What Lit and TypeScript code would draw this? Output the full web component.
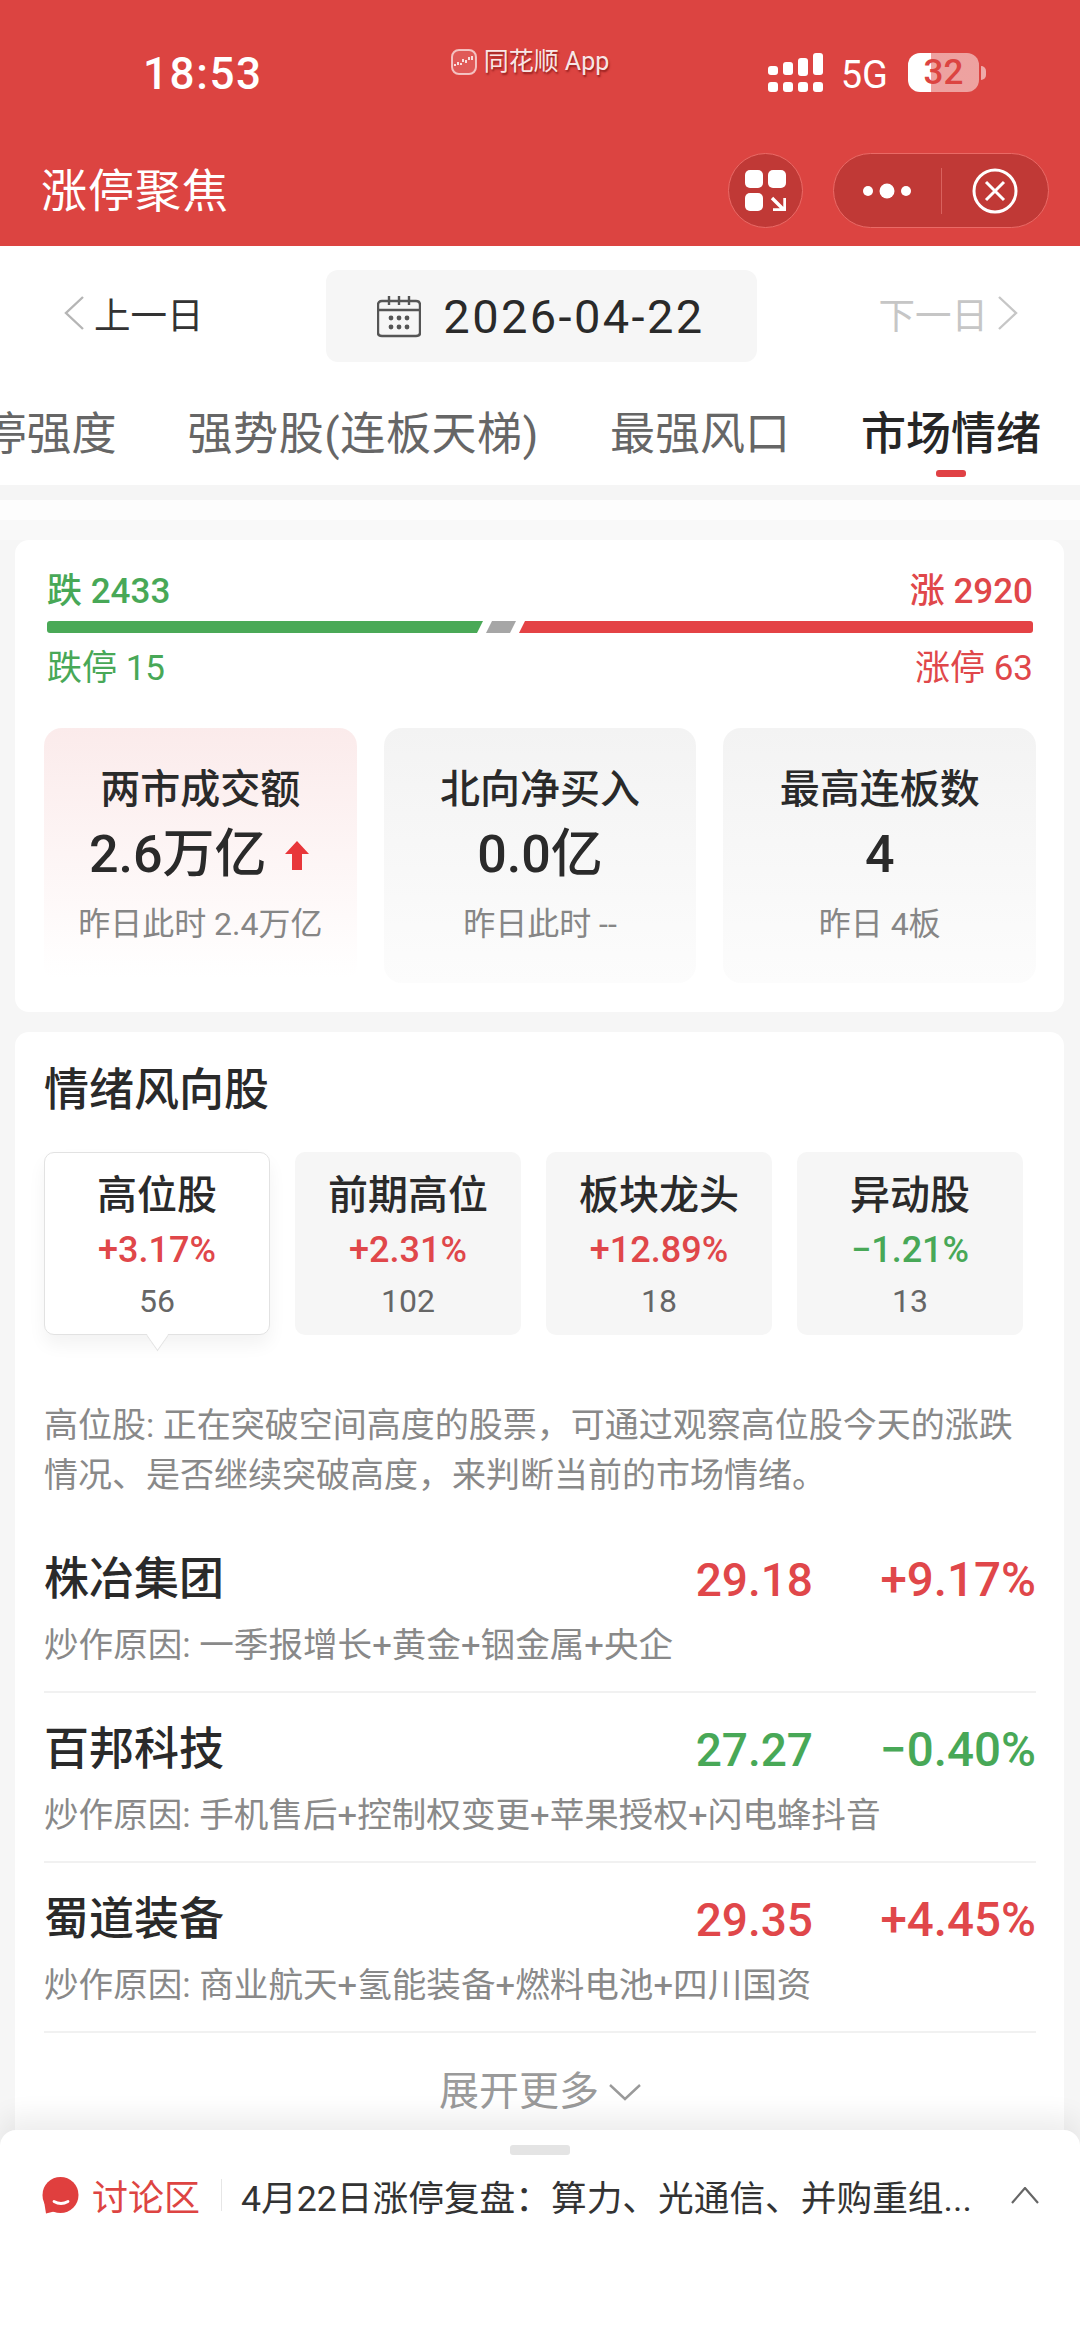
import { LitElement, css, html, svg } from 'lit';
import { customElement } from 'lit/decorators.js';
import { classMap } from 'lit/directives/class-map.js';

const metrics = [
  { title: '两市成交额', value: '2.6万亿', sub: '昨日此时 2.4万亿', hot: true },
  { title: '北向净买入', value: '0.0亿', sub: '昨日此时 --', hot: false },
  { title: '最高连板数', value: '4', sub: '昨日 4板', hot: false },
];

const tiles = [
  { name: '高位股', pct: '+3.17%', count: '56', up: true, active: true },
  { name: '前期高位', pct: '+2.31%', count: '102', up: true, active: false },
  { name: '板块龙头', pct: '+12.89%', count: '18', up: true, active: false },
  { name: '异动股', pct: '−1.21%', count: '13', up: false, active: false },
];

const stocks = [
  { name: '株冶集团', price: '29.18', pct: '+9.17%', up: true, reason: '炒作原因: 一季报增长+黄金+铟金属+央企' },
  { name: '百邦科技', price: '27.27', pct: '−0.40%', up: false, reason: '炒作原因: 手机售后+控制权变更+苹果授权+闪电蜂抖音' },
  { name: '蜀道装备', price: '29.35', pct: '+4.45%', up: true, reason: '炒作原因: 商业航天+氢能装备+燃料电池+四川国资' },
];

const tabs = ['涨停强度', '强势股(连板天梯)', '最强风口', '市场情绪'];

const signalBars = [
  [0, 13, 9],
  [15, 9, 13],
  [30, 5, 18],
  [45, 0, 22],
];

@customElement('app-root')
export class AppRoot extends LitElement {
  static styles = css`
    :host {
      display: block;
      position: relative;
      width: 1080px;
      height: 2341px;
      overflow: hidden;
      background: #f6f6f6;
      color: #2a2a2a;
      font-family: Roboto, 'Noto Sans CJK SC', sans-serif;
    }
    svg {
      display: block;
      flex-shrink: 0;
    }

    /* header */
    .header {
      background: #dc4441;
      color: #fff;
      height: 246px;
    }
    .status {
      display: flex;
      align-items: flex-start;
      height: 146px;
      box-sizing: border-box;
      padding: 48px 94px 0 143px;
    }
    .time {
      margin-top: 5px;
      font-size: 44px;
      line-height: 42px;
      font-weight: 500;
      letter-spacing: 1.6px;
    }
    .carrier {
      display: flex;
      align-items: center;
      gap: 7px;
      margin-left: 188px;
      font-size: 25px;
      line-height: 27px;
      color: rgba(255, 255, 255, 0.9);
      text-shadow: 1px 2px 2px rgba(90, 0, 0, 0.55);
    }
    .signal {
      margin-left: auto;
      margin-top: 5px;
    }
    .net {
      margin: 7px 0 0 18px;
      font-size: 38px;
      line-height: 40px;
    }
    .battery {
      display: flex;
      align-items: center;
      margin: 5px 0 0 20px;
    }
    .battery-body {
      width: 71px;
      height: 39px;
      border-radius: 12px;
      background: linear-gradient(90deg, #fff 23px, rgba(255, 255, 255, 0.5) 23px);
      color: #dc4441;
      font-size: 35px;
      font-weight: 500;
      line-height: 39px;
      text-align: center;
    }
    .battery-tip {
      width: 5px;
      height: 14px;
      margin-left: 2px;
      border-radius: 0 5px 5px 0;
      background: rgba(255, 255, 255, 0.55);
    }
    .nav {
      display: flex;
      align-items: center;
      height: 89px;
      padding: 0 31px 0 41px;
    }
    .nav-title {
      font-size: 46px;
      line-height: 60px;
      letter-spacing: 1px;
    }
    .round,
    .capsule {
      display: flex;
      align-items: center;
      box-sizing: border-box;
      height: 75px;
      border: 1px solid #ea6a66;
      border-radius: 38px;
      background: #c03936;
    }
    .round {
      justify-content: center;
      width: 75px;
      margin-left: auto;
    }
    .capsule {
      width: 216px;
      margin-left: 30px;
    }
    .capsule-half {
      display: flex;
      justify-content: center;
      flex: 1;
    }
    .capsule-line {
      width: 1px;
      height: 46px;
      background: #d9625e;
    }

    /* date row */
    .date-row {
      display: flex;
      align-items: flex-start;
      justify-content: space-between;
      height: 116px;
      box-sizing: border-box;
      padding: 24px 62px 0 64px;
      background: #fff;
    }
    .day {
      display: flex;
      align-items: center;
      gap: 9px;
      height: 86px;
      font-size: 36.5px;
      color: #333;
    }
    .day.off {
      color: #c6c6c6;
    }
    .date {
      display: flex;
      align-items: center;
      justify-content: center;
      gap: 22px;
      width: 431px;
      height: 92px;
      border-radius: 12px;
      background: #f6f6f6;
      font-size: 47px;
      letter-spacing: 2.4px;
    }

    /* tabs, the row is scrolled to its end so the first one is cut off */
    .tabs {
      display: flex;
      justify-content: flex-end;
      gap: 71px;
      overflow: hidden;
      height: 123px;
      box-sizing: border-box;
      padding: 43px 39px 0 0;
      background: #fff;
    }
    .tab {
      display: flex;
      flex-direction: column;
      align-items: center;
      flex-shrink: 0;
      font-size: 45px;
      line-height: 60px;
      white-space: nowrap;
      color: #666;
    }
    .tab:nth-child(2) {
      letter-spacing: 0.6px;
    }
    .tab.on {
      color: #262626;
      font-weight: 500;
    }
    .tab-mark {
      width: 30px;
      height: 7px;
      margin-top: 5px;
      border-radius: 3px;
      background: #e04145;
    }

    /* cards */
    .main {
      padding: 55px 16px 0 15px;
      background: linear-gradient(
        180deg,
        #f5f5f5 15px,
        #fdfdfd 15px,
        #fdfdfd 35px,
        #f9f9f9 35px,
        #f9f9f9 55px,
        #f6f6f6 55px
      );
    }
    .card {
      border-radius: 14px;
      background: #fff;
    }
    .overview {
      height: 472px;
      box-sizing: border-box;
      padding: 32px 28px 0 29px;
    }
    .line {
      display: flex;
      justify-content: space-between;
      margin: 0 3px 0 3px;
      font-size: 35px;
      line-height: 40px;
      font-weight: 500;
    }
    .line.low {
      margin-top: 16px;
      font-weight: 400;
    }
    .up {
      color: #e0474a;
    }
    .down {
      color: #48a857;
    }
    .bar {
      display: flex;
      gap: 3px;
      height: 12px;
      margin: 9px 3px 0 3px;
    }
    .bar-down,
    .bar-flat,
    .bar-up {
      height: 100%;
    }
    .bar-down {
      width: 436px;
      background: #4aa957;
      border-radius: 3px 0 0 3px;
      clip-path: polygon(0 0, 100% 0, calc(100% - 6px) 100%, 0 100%);
    }
    .bar-flat {
      width: 30px;
      background: #a6a6a6;
      clip-path: polygon(6px 0, 100% 0, calc(100% - 6px) 100%, 0 100%);
    }
    .bar-up {
      flex: 1;
      background: #e44245;
      border-radius: 0 3px 3px 0;
      clip-path: polygon(6px 0, 100% 0, 100% 100%, 0 100%);
    }
    .metrics {
      display: grid;
      grid-template-columns: repeat(3, 1fr);
      gap: 27px;
      margin-top: 39px;
    }
    .metric {
      height: 255px;
      box-sizing: border-box;
      padding-top: 37px;
      border-radius: 18px;
      background: linear-gradient(180deg, #f3f3f3, #fcfcfc);
      text-align: center;
    }
    .metric.hot {
      background: linear-gradient(180deg, #fbebeb, #fff 98%);
    }
    .metric-title {
      font-size: 40px;
      line-height: 50px;
      font-weight: 500;
    }
    .metric-value {
      display: flex;
      align-items: center;
      justify-content: center;
      gap: 18px;
      margin-top: 10px;
      font-size: 52px;
      line-height: 60px;
      font-weight: 500;
    }
    .metric.hot .metric-value {
      padding-right: 3px;
    }
    .metric-sub {
      margin-top: 19px;
      font-size: 32px;
      line-height: 40px;
      color: #868686;
    }
    .wind {
      margin-top: 20px;
      height: 1400px;
      box-sizing: border-box;
      padding: 29px 28px 0 29px;
    }
    .wind-title {
      font-size: 45px;
      line-height: 60px;
      font-weight: 500;
    }
    .tiles {
      display: grid;
      grid-template-columns: repeat(4, 226px);
      gap: 25px;
      margin-top: 31px;
    }
    .tile {
      position: relative;
      height: 183px;
      box-sizing: border-box;
      padding-top: 19px;
      border-radius: 10px;
      background: #f6f6f6;
      text-align: center;
    }
    .tile.on {
      border: 1px solid #e2e2e2;
      padding-top: 18px;
      background: #fff;
      box-shadow: 0 10px 18px rgba(0, 0, 0, 0.05);
    }
    .tile.on::after {
      content: '';
      position: absolute;
      left: 50%;
      bottom: -11px;
      width: 18px;
      height: 18px;
      margin-left: -9px;
      border-right: 1px solid #e2e2e2;
      border-bottom: 1px solid #e2e2e2;
      background: #fff;
      transform: rotate(45deg) skew(10deg, 10deg);
    }
    .tile-name {
      font-size: 40px;
      line-height: 50px;
      font-weight: 500;
    }
    .tile-pct {
      margin-top: 9px;
      font-size: 36px;
      line-height: 40px;
      font-weight: 500;
    }
    .tile-count {
      margin-top: 11px;
      font-size: 32px;
      line-height: 40px;
      color: #666;
    }
    .desc {
      margin: 65px 0 0 0;
      font-size: 34px;
      line-height: 50px;
      color: #898989;
    }
    .stocks {
      margin-top: 23px;
    }
    .stock {
      padding: 27px 0 21px;
      border-bottom: 2px solid #f1f1f1;
    }
    .stock-head {
      display: flex;
      align-items: center;
      line-height: 60px;
    }
    .stock-name {
      flex: 1;
      font-size: 45px;
      font-weight: 500;
    }
    .stock-price,
    .stock-pct {
      font-size: 46px;
      font-weight: 500;
    }
    .stock-pct {
      width: 223px;
      font-size: 47.5px;
      text-align: right;
    }
    .stock-reason {
      margin-top: 10px;
      font-size: 34.6px;
      line-height: 50px;
      color: #898989;
    }
    .more {
      display: flex;
      align-items: center;
      justify-content: center;
      gap: 10px;
      margin-top: 29px;
      font-size: 40px;
      line-height: 60px;
      color: #9a9a9a;
    }

    /* bottom sheet */
    .sheet {
      position: absolute;
      left: 0;
      right: 0;
      bottom: 0;
      height: 211px;
      border-radius: 16px 16px 0 0;
      background: #fff;
      box-shadow: 0 -14px 26px rgba(0, 0, 0, 0.07);
    }
    .grip {
      width: 60px;
      height: 10px;
      margin: 15px auto 0;
      border-radius: 3px;
      background: #e4e4e4;
    }
    .sheet-row {
      display: flex;
      align-items: center;
      margin-top: 20px;
      padding: 0 41px;
      height: 40px;
    }
    .sheet-label {
      margin-left: 13px;
      font-size: 36px;
      color: #dd4442;
    }
    .sheet-line {
      width: 1px;
      height: 32px;
      margin: 0 19px 0 21px;
      background: #e6e6e6;
    }
    .sheet-text {
      flex: 1;
      font-size: 35.7px;
      white-space: nowrap;
      color: #333;
    }
  `;

  private renderChevron(dir: 'left' | 'right', color: string) {
    const d = dir === 'left' ? 'M19 1 L2 17 L19 33' : 'M2 1 L19 17 L2 33';
    return html`<svg width="21" height="34" viewBox="0 0 21 34" fill="none" stroke=${color} stroke-width="2.4">
      <path d=${d} />
    </svg>`;
  }

  private renderStatus() {
    return html`<div class="status">
      <div class="time">18:53</div>
      <div class="carrier">
        <svg width="26" height="26" viewBox="0 0 26 26" fill="none">
          <rect x="1" y="1" width="24" height="24" rx="7" fill="rgba(255,255,255,.12)" stroke="rgba(255,255,255,.65)" stroke-width="2" />
          <path d="M4 15v2M7 13v3M10 14v2M12 10v3M15 11v3M18 8v3M21 7v4" stroke="#fff" stroke-width="1.6" />
        </svg>
        <span>同花顺 App</span>
      </div>
      <svg class="signal" width="55" height="39" viewBox="0 0 55 39" fill="#fff">
        ${signalBars.map(
          ([x, y, h]) => svg`
            <rect x=${x} y=${y} width="10" height=${h} rx="3" />
            <rect x=${x} y="29" width="10" height="10" rx="3" />`,
        )}
      </svg>
      <div class="net">5G</div>
      <div class="battery">
        <div class="battery-body">32</div>
        <div class="battery-tip"></div>
      </div>
    </div>`;
  }

  private renderNav() {
    return html`<div class="nav">
      <div class="nav-title">涨停聚焦</div>
      <div class="round">
        <svg width="41" height="41" viewBox="0 0 41 41" fill="#fff">
          <rect width="18" height="18" rx="5" />
          <rect x="23" width="18" height="18" rx="5" />
          <rect y="23" width="18" height="18" rx="5" />
          <path d="M27 28 L39 40 M28 40 H40 V28" fill="none" stroke="#fff" stroke-width="3.4" />
        </svg>
      </div>
      <div class="capsule">
        <div class="capsule-half">
          <svg width="48" height="16" viewBox="0 0 48 16" fill="#fff">
            <circle cx="5" cy="8" r="5" />
            <circle cx="24" cy="8" r="7.5" />
            <circle cx="43" cy="8" r="5" />
          </svg>
        </div>
        <div class="capsule-line"></div>
        <div class="capsule-half">
          <svg width="46" height="46" viewBox="0 0 46 46" fill="none" stroke="#fff" stroke-width="3">
            <circle cx="23" cy="23" r="21" />
            <path d="M14 14 L32 32 M32 14 L14 32" />
          </svg>
        </div>
      </div>
    </div>`;
  }

  private renderDateRow() {
    return html`<div class="date-row">
      <div class="day">${this.renderChevron('left', '#b5b5b5')}<span>上一日</span></div>
      <div class="date">
        <svg width="44" height="43" viewBox="0 0 44 43" fill="none" stroke="#555" stroke-width="2.4">
          <path d="M5 6 H39 Q43 6 43 10 V38 Q43 41 39 41 H5 Q1 41 1 38 V10 Q1 6 5 6 Z" />
          <path d="M1 15 H43 M12 1 V10 M22 1 V10 M32 1 V10" />
          <g fill="#555" stroke="none">
            <circle cx="14" cy="23" r="2.4" /><circle cx="22" cy="23" r="2.4" /><circle cx="30" cy="23" r="2.4" />
            <circle cx="14" cy="32" r="2.4" /><circle cx="22" cy="32" r="2.4" /><circle cx="30" cy="32" r="2.4" />
          </g>
        </svg>
        <span>2026-04-22</span>
      </div>
      <div class="day off"><span>下一日</span>${this.renderChevron('right', '#c6c6c6')}</div>
    </div>`;
  }

  private renderOverview() {
    return html`<section class="card overview">
      <div class="line">
        <span class="down">跌 2433</span>
        <span class="up">涨 2920</span>
      </div>
      <div class="bar">
        <div class="bar-down"></div>
        <div class="bar-flat"></div>
        <div class="bar-up"></div>
      </div>
      <div class="line low">
        <span class="down">跌停 15</span>
        <span class="up">涨停 63</span>
      </div>
      <div class="metrics">
        ${metrics.map(
          (m) => html`<div class=${classMap({ metric: true, hot: m.hot })}>
            <div class="metric-title">${m.title}</div>
            <div class="metric-value">
              <span>${m.value}</span>
              ${m.hot
                ? html`<svg width="24" height="29" viewBox="0 0 24 29" fill="#e8363a">
                    <path d="M12 0 L24 13 H17 V29 H7 V13 H0 Z" />
                  </svg>`
                : ''}
            </div>
            <div class="metric-sub">${m.sub}</div>
          </div>`,
        )}
      </div>
    </section>`;
  }

  private renderWind() {
    return html`<section class="card wind">
      <div class="wind-title">情绪风向股</div>
      <div class="tiles">
        ${tiles.map(
          (t) => html`<div class=${classMap({ tile: true, on: t.active })}>
            <div class="tile-name">${t.name}</div>
            <div class="tile-pct ${t.up ? 'up' : 'down'}">${t.pct}</div>
            <div class="tile-count">${t.count}</div>
          </div>`,
        )}
      </div>
      <div class="desc">
        高位股: 正在突破空间高度的股票，可通过观察高位股今天的涨跌<br />情况、是否继续突破高度，来判断当前的市场情绪。
      </div>
      <div class="stocks">
        ${stocks.map(
          (s) => html`<div class="stock">
            <div class="stock-head">
              <div class="stock-name">${s.name}</div>
              <div class="stock-price ${s.up ? 'up' : 'down'}">${s.price}</div>
              <div class="stock-pct ${s.up ? 'up' : 'down'}">${s.pct}</div>
            </div>
            <div class="stock-reason">${s.reason}</div>
          </div>`,
        )}
      </div>
      <div class="more">
        <span>展开更多</span>
        <svg width="32" height="17" viewBox="0 0 32 17" fill="none" stroke="#9a9a9a" stroke-width="2.4">
          <path d="M1 1 L16 15 L31 1" />
        </svg>
      </div>
    </section>`;
  }

  private renderSheet() {
    return html`<div class="sheet">
      <div class="grip"></div>
      <div class="sheet-row">
        <svg width="38" height="37" viewBox="0 0 38 37">
          <circle cx="19.5" cy="18" r="18" fill="#e03f3e" />
          <path d="M3 24 L5 36.5 L15 34 Z" fill="#e03f3e" />
          <path d="M13 24.5 Q20 28.5 27 24.5" fill="none" stroke="#fff" stroke-width="2.8" stroke-linecap="round" />
        </svg>
        <span class="sheet-label">讨论区</span>
        <div class="sheet-line"></div>
        <span class="sheet-text">4月22日涨停复盘：算力、光通信、并购重组...</span>
        <svg width="28" height="17" viewBox="0 0 28 17" fill="none" stroke="#666" stroke-width="2.2">
          <path d="M1 16 L14 1 L27 16" />
        </svg>
      </div>
    </div>`;
  }

  render() {
    return html`
      <header class="header">${this.renderStatus()} ${this.renderNav()}</header>
      ${this.renderDateRow()}
      <nav class="tabs">
        ${tabs.map(
          (t, i) => html`<div class=${classMap({ tab: true, on: i === tabs.length - 1 })}>
            <span>${t}</span>
            ${i === tabs.length - 1 ? html`<div class="tab-mark"></div>` : ''}
          </div>`,
        )}
      </nav>
      <main class="main">${this.renderOverview()} ${this.renderWind()}</main>
      ${this.renderSheet()}
    `;
  }
}
